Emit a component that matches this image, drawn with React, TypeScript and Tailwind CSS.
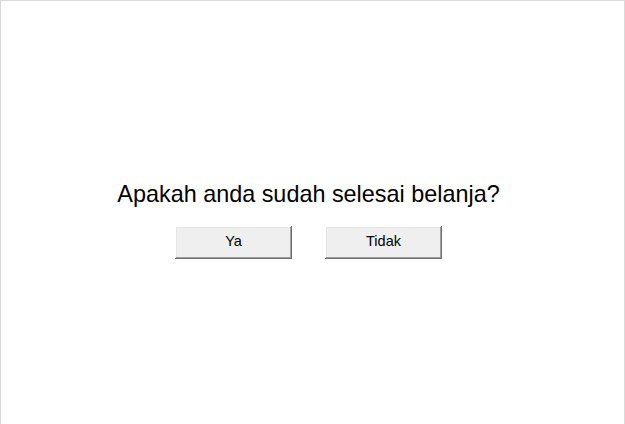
import React from "react";

export default function App() {
  return (
    <div className="w-[625px] h-[424px] bg-white border-t border-l border-r border-[#dadada] flex flex-col items-center pt-[176px] pr-[8px] overflow-hidden">
      <div
        className="text-[23.4px] leading-[34px] text-black"
        style={{ fontFamily: '"Liberation Sans", Arial, sans-serif' }}
      >
        Apakah anda sudah selesai belanja?
      </div>
      <div className="flex gap-[33px] mt-[15px]">
        {["Ya", "Tidak"].map((t) => (
          <button
            key={t}
            className="w-[117px] h-[33px] bg-[#efefef] text-[14.5px] text-black flex items-center justify-center pb-[1px] shadow-[inset_-1px_-1px_#6f6f6f,inset_1px_1px_#ffffff,inset_-2px_-2px_#9e9e9e,inset_2px_2px_#e6e6e6]"
            style={{ fontFamily: '"Liberation Sans", Arial, sans-serif' }}
          >
            {t}
          </button>
        ))}
      </div>
    </div>
  );
}
